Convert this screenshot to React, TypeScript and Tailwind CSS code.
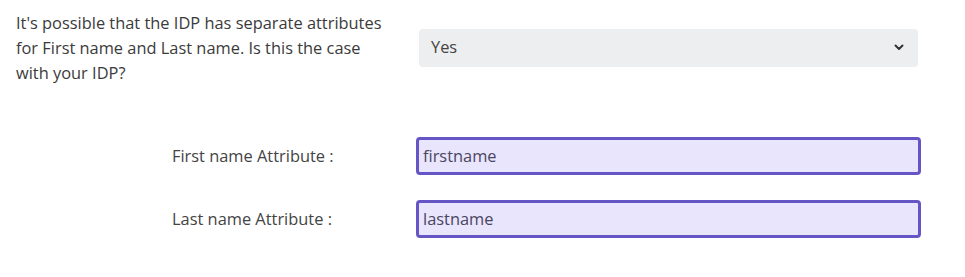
export default function App() {
  return (
    <div className="w-[965px] h-[277px] bg-white text-[16.4px] text-[#3b3b3b]" style={{ fontFamily: '"Open Sans", sans-serif' }}>
      <div className="flex items-center pt-[10px]">
        <p className="ml-4 w-[372px] leading-[25px]">
          It's possible that the IDP has separate attributes for First name and Last name. Is this the case with your IDP?
        </p>
        <div className="ml-[31px] w-[499px] h-[38px] rounded bg-[#eceef0] flex items-center justify-between pl-3 pr-3">
          <span className="text-[#444]">Yes</span>
          <svg width="10" height="7" viewBox="0 0 10 7" className="mr-0.5">
            <path d="M1.5 1.5 L5 5 L8.5 1.5" fill="none" stroke="#333" strokeWidth="2" strokeLinecap="round" strokeLinejoin="round" />
          </svg>
        </div>
      </div>
      <div className="mt-[52px] flex flex-col gap-[25px]">
        {[
          ["First name Attribute :", "firstname"],
          ["Last name Attribute :", "lastname"],
        ].map(([label, value]) => (
          <div key={label} className="flex items-center">
            <span className="ml-[172px] w-[244px] text-[#444]">{label}</span>
            <div className="w-[505px] h-[38px] rounded border-[3px] border-[#6655c4] bg-[#e8e5fd] flex items-center pl-[4px] text-[#4a4560]">
              {value}
            </div>
          </div>
        ))}
      </div>
    </div>
  );
}
